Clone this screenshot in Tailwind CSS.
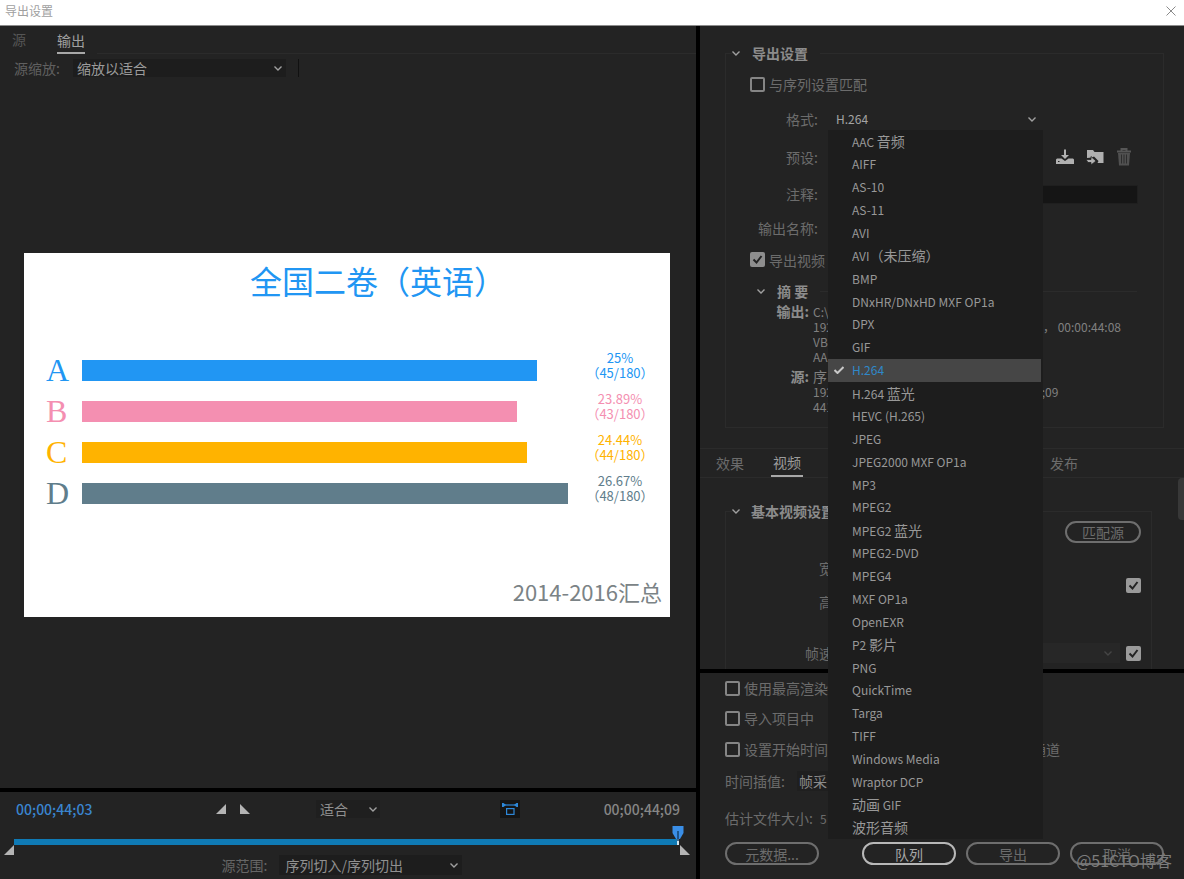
<!DOCTYPE html>
<html lang="zh-CN">
<head>
  <meta charset="UTF-8" />
  <meta name="viewport" content="width=device-width, initial-scale=1" />
  <title>导出设置</title>

  <!-- Tailwind CSS via CDN -->
  <script src="https://cdn.jsdelivr.net/npm/@tailwindcss/browser@4"></script>
</head>
<body class="flex min-h-screen flex-col bg-[#232323] font-['Noto_Sans_CJK_SC','Noto_Sans',sans-serif] text-sm/5 text-[#6c6c6c]">
  <!-- Title bar -->
  <header class="flex h-[26px] items-center justify-between border-b border-[#8c8c8c] bg-white pr-2 pb-1 pl-[5px]">
    <h1 class="text-xs text-[#a0a0a0]">导出设置</h1>
    <button aria-label="关闭">
      <svg class="size-[10px]" viewBox="0 0 10 10" fill="none" stroke="#8a8a8a"><path d="M0.5 0.5 9.5 9.5M9.5 0.5 0.5 9.5" /></svg>
    </button>
  </header>

  <main class="grid flex-1 grid-cols-[700fr_484fr]">
    <!-- Left: preview -->
    <section class="flex flex-col border-r-4 border-black">
      <nav class="flex h-7 items-end pl-3">
        <button class="mr-[31px] h-7 pt-0.5 pb-1 text-[#555]">源</button>
        <button class="h-7 border-b-2 border-[#a8a8a8] pt-0.5 text-[#a0a0a0]">输出</button>
        <span class="ml-3 flex-1 border-b border-[#2b2b2b]"></span>
      </nav>
      <div class="flex h-7 items-center pl-[14px]">
        <label for="scale" class="w-[59px] text-[#606060]">源缩放:</label>
        <div class="grid w-[213px] items-center bg-[#1d1d1d]">
          <select id="scale" class="col-start-1 row-start-1 h-[18px] appearance-none pl-1 text-sm/[18px] text-[#9c9c9c]"><option>缩放以适合</option></select>
          <svg class="pointer-events-none col-start-1 row-start-1 mr-1 h-[5px] w-2 justify-self-end" viewBox="0 0 8 5" fill="none" stroke="#a0a0a0" stroke-width="1.4"><path d="M0.5 0.5 4 4 7.5 0.5" /></svg>
        </div>
        <span class="ml-3 h-[18px] w-px bg-[#111]"></span>
      </div>

      <div class="flex flex-1 items-center pr-[26px] pl-6">
        <figure class="flex aspect-video w-full flex-col bg-white">
          <h2 class="h-[97px] pt-[5px] pl-[35%] text-[32px]/[44px] text-[#2196f3]">全国二卷（英语）</h2>
          <div id="chart"></div>
          <figcaption class="mt-auto pr-2 pb-2.5 text-right text-[22px]/[32px] text-[#7b8386]">2014-2016汇总</figcaption>
        </figure>
      </div>

      <!-- Transport -->
      <div class="border-t-4 border-black">
        <div class="grid h-[34px] grid-cols-[200px_100px_184px_1fr] items-center pr-4 pl-4">
          <span class="font-medium text-[#3a85cf]">00;00;44;03</span>
          <div class="flex gap-[14px]">
            <button aria-label="设置入点"><svg class="size-[10px]" viewBox="0 0 10 10" fill="#b4b4b4"><path d="M10 0V10H0Z" /></svg></button>
            <button aria-label="设置出点"><svg class="size-[10px]" viewBox="0 0 10 10" fill="#b4b4b4"><path d="M0 0V10H10Z" /></svg></button>
          </div>
          <div class="grid w-16 items-center bg-[#1f1f1f]">
            <select aria-label="缩放级别" class="col-start-1 row-start-1 h-[18px] appearance-none pl-1 text-sm/[18px] text-[#909090]"><option>适合</option></select>
            <svg class="pointer-events-none col-start-1 row-start-1 mr-[3px] h-[5px] w-2 justify-self-end" viewBox="0 0 8 5" fill="none" stroke="#a0a0a0" stroke-width="1.4"><path d="M0.5 0.5 4 4 7.5 0.5" /></svg>
          </div>
          <div class="flex items-center justify-between">
            <button aria-label="长宽比校正" class="bg-[#151515] p-px">
              <svg class="h-[16px] w-[18px]" viewBox="0 0 18 16" fill="none" stroke="#2d87d8" stroke-width="1.2">
                <path d="M2 4H16" />
                <path d="M1 2H2.500L5 4 2.500 6H1ZM17 2H15.500L13 4 15.500 6H17Z" fill="#2d87d8" stroke="none" />
                <rect x="5.600" y="7.600" width="7.400" height="5.800" />
              </svg>
            </button>
            <span class="font-medium text-[#868686]">00;00;44;09</span>
          </div>
        </div>
        <div class="flex h-[13px] justify-end pr-3">
          <svg class="h-[15px] w-3" viewBox="0 0 12 15"><path d="M0.500 0H11.500V7L8 13H4L0.500 7Z" fill="#3a8ee6" /><path d="M6 5V15" stroke="#14406b" stroke-width="1.500" /></svg>
        </div>
        <div class="mr-[17px] ml-[14px] h-1.5 border-r-2 border-[#cfe3ee] bg-[#0f7ab5]"></div>
        <div class="flex justify-between pr-1.5 pl-1">
          <svg class="size-[10px]" viewBox="0 0 10 10" fill="#b4b4b4"><path d="M10 0V10H0Z" /></svg>
          <svg class="size-[10px]" viewBox="0 0 10 10" fill="#b4b4b4"><path d="M0 0V10H10Z" /></svg>
        </div>
        <div class="flex items-center justify-center pr-3 pb-1">
          <label for="range" class="mr-3 text-[#666]">源范围:</label>
          <div class="grid w-[183px] items-center bg-[#1d1d1d]">
            <select id="range" class="col-start-1 row-start-1 h-5 appearance-none pl-1.5 text-[#909090]"><option>序列切入/序列切出</option></select>
            <svg class="pointer-events-none col-start-1 row-start-1 mr-1 h-[5px] w-2 justify-self-end" viewBox="0 0 8 5" fill="none" stroke="#a0a0a0" stroke-width="1.4"><path d="M0.5 0.5 4 4 7.5 0.5" /></svg>
          </div>
        </div>
      </div>
    </section>

    <!-- Right: settings -->
    <section class="flex flex-col">
      <fieldset class="mt-[17px] mr-5 mb-5 ml-[25px] border border-[#2b2b2b] pb-[13px]">
        <legend class="ml-1.5 flex h-5 items-center gap-3 pr-3 font-bold text-[#8c8c8c]">
          <svg class="h-[5px] w-2" viewBox="0 0 8 5" fill="none" stroke="#a0a0a0" stroke-width="1.4"><path d="M0.5 0.5 4 4 7.5 0.5" /></svg>
          导出设置
        </legend>
        <label class="flex h-[42px] items-center gap-1 pl-6">
          <input type="checkbox" class="size-[15px] appearance-none rounded-xs border-2 border-[#858585]" />与序列设置匹配
        </label>
        <div class="relative grid h-7 grid-cols-[92px_210px] items-center gap-3">
          <label for="format" class="text-right">格式:</label>
          <div class="grid items-center">
            <select id="format" class="col-start-1 row-start-1 h-5 appearance-none pl-1.5 text-xs text-[#a4a4a4]"><option>H.264</option></select>
            <svg class="pointer-events-none col-start-1 row-start-1 mr-1 h-[5px] w-2 justify-self-end" viewBox="0 0 8 5" fill="none" stroke="#a0a0a0" stroke-width="1.4"><path d="M0.5 0.5 4 4 7.5 0.5" /></svg>
          </div>
          <ul id="formats" class="absolute top-[25px] left-[102px] z-10 flex h-[709px] w-[215px] flex-col bg-[#1d1d1d]"></ul>
        </div>
        <div class="grid h-12 grid-cols-[92px_1fr] items-center gap-3">
          <span class="text-right">预设:</span>
          <div class="flex items-center justify-end gap-3 pr-[31px]">
            <button aria-label="保存预设">
              <svg class="h-4 w-[18px]" viewBox="0 0 18 16" fill="#b0b0b0">
                <path d="M8 0.500H10V6H13L9 10 5 6H8Z" />
                <path fill-rule="evenodd" d="M1 9.500H5.500L9 12 12.500 9.500H17L18 10.500V15H0V10.500ZM2 12V13H3.500V12Z" />
              </svg>
            </button>
            <button aria-label="导入预设">
              <svg class="h-4 w-[18px]" viewBox="0 0 18 16" fill="#b0b0b0">
                <path d="M1 1H7L8.500 3H17.500V14H11.500L12.500 12 8 7.500 6 8.500 1 9Z" />
                <path d="M0 10.500H5V7.500L10 12 5 16V13.500H2Z" stroke="#232323" stroke-width="0.800" />
              </svg>
            </button>
            <button aria-label="删除预设">
              <svg class="h-[18px] w-4" viewBox="0 0 16 18">
                <path d="M5.500 2.500V1H10.500V2.500M1 3.500H15" stroke="#565656" stroke-width="2" fill="none" />
                <path d="M2 5H14L13 17.500H3Z" fill="#505050" />
                <path d="M5.500 6.500V15.500M8 6.500V15.500M10.500 6.500V15.500" stroke="#2d2d2d" />
              </svg>
            </button>
          </div>
        </div>
        <div class="grid h-[26px] grid-cols-[92px_1fr] items-center gap-3 pr-[25px]">
          <label for="comment" class="text-right">注释:</label>
          <input id="comment" class="h-[19px] w-full border border-[#1f1f1f] bg-[#151515] px-1 text-xs" />
        </div>
        <div class="grid h-[42px] grid-cols-[92px_1fr] items-center gap-3">
          <span class="text-right">输出名称:</span>
        </div>
        <label class="flex h-[21px] items-center gap-1 pl-6">
          <span class="grid">
            <input type="checkbox" checked class="col-start-1 row-start-1 size-[15px] appearance-none rounded-xs bg-[#8e8e8e]" />
            <svg class="pointer-events-none col-start-1 row-start-1 size-[15px]" viewBox="0 0 15 15" fill="none" stroke="#232323" stroke-width="2"><path d="M3.500 7.500 6.500 10.500 11.500 4" /></svg>
          </span>
          导出视频
        </label>
        <div class="mt-3 mb-1 flex h-[18px] items-center pr-[26px] pl-[31px] font-bold text-[#8c8c8c]">
          <svg class="mr-3 h-[5px] w-2" viewBox="0 0 8 5" fill="none" stroke="#a0a0a0" stroke-width="1.4"><path d="M0.5 0.5 4 4 7.5 0.5" /></svg>
          摘 要
          <span class="ml-3 flex-1 border-t border-[#2b2b2b]"></span>
        </div>
        <dl class="grid grid-cols-[83px_1fr] gap-x-1 gap-y-[5px] text-xs/[15px] text-[#808080]">
          <dt class="text-right text-sm/[15px] font-bold text-[#8c8c8c]">输出:</dt>
          <dd class="grid grid-cols-[218px_1fr] whitespace-nowrap">
            <span class="col-span-2">C:\</span>
            <span>192</span><span>码， 00:00:44:08</span>
            <span class="col-span-2">VB</span>
            <span class="col-span-2">AA</span>
          </dd>
          <dt class="text-right text-sm/[15px] font-bold text-[#8c8c8c]">源:</dt>
          <dd class="grid grid-cols-[222px_1fr] whitespace-nowrap">
            <span class="col-span-2 text-sm/[15px]">序</span>
            <span>192</span><span>4;09</span>
            <span class="col-span-2">441</span>
          </dd>
        </dl>
      </fieldset>

      <nav class="flex h-[30px] items-center border-y border-[#2b2b2b] pr-[106px] pl-4">
        <button>效果</button>
        <button class="ml-[27px] h-[27px] border-b-2 border-[#a8a8a8] px-0.5 text-[#9c9c9c]">视频</button>
        <button class="ml-auto">发布</button>
      </nav>

      <div class="relative flex-1 pt-[23px] pr-[32px] pl-[25px]">
        <span class="absolute top-0 right-0 h-[42px] w-1.5 rounded-l-sm bg-[#383838]"></span>
        <fieldset class="h-full border border-b-0 border-[#2b2b2b]">
          <legend class="ml-1.5 flex h-5 items-center gap-[11px] pr-3 font-bold text-[#8c8c8c]">
            <svg class="h-[5px] w-2" viewBox="0 0 8 5" fill="none" stroke="#a0a0a0" stroke-width="1.4"><path d="M0.5 0.5 4 4 7.5 0.5" /></svg>
            基本视频设置
          </legend>
          <div class="flex justify-end pr-2.5">
            <button class="h-[22px] w-[76px] rounded-full border-2 border-[#6e6e6e] text-sm/[16px]">匹配源</button>
          </div>
          <div class="mt-2 flex items-center justify-between pr-2.5">
            <div class="w-[125px] text-right leading-[34px]">
              <p>宽度:</p>
              <p>高度:</p>
            </div>
            <span class="grid">
              <input type="checkbox" checked aria-label="匹配宽度和高度" class="col-start-1 row-start-1 size-[15px] appearance-none rounded-xs bg-[#9a9a9a]" />
              <svg class="pointer-events-none col-start-1 row-start-1 size-[15px]" viewBox="0 0 15 15" fill="none" stroke="#232323" stroke-width="2"><path d="M3.500 7.500 6.500 10.500 11.500 4" /></svg>
            </span>
          </div>
          <div class="mt-[18px] flex h-8 items-center pr-2.5">
            <label for="fps" class="mr-3 w-[125px] text-right">帧速率:</label>
            <div class="mr-1.5 grid flex-1 items-center bg-[#272727]">
              <select id="fps" class="col-start-1 row-start-1 h-5 appearance-none"></select>
              <svg class="pointer-events-none col-start-1 row-start-1 mr-2 h-[5px] w-2 justify-self-end" viewBox="0 0 8 5" fill="none" stroke="#454545" stroke-width="1.4"><path d="M0.5 0.5 4 4 7.5 0.5" /></svg>
            </div>
            <span class="grid">
              <input type="checkbox" checked aria-label="匹配帧速率" class="col-start-1 row-start-1 size-[15px] appearance-none rounded-xs bg-[#9a9a9a]" />
              <svg class="pointer-events-none col-start-1 row-start-1 size-[15px]" viewBox="0 0 15 15" fill="none" stroke="#232323" stroke-width="2"><path d="M3.500 7.500 6.500 10.500 11.500 4" /></svg>
            </span>
          </div>
        </fieldset>
      </div>

      <!-- Export options and actions -->
      <div class="relative border-t-4 border-black pr-5 pb-[14px] pl-[25px]">
        <label class="flex h-[30px] items-center gap-1"><input type="checkbox" class="size-[15px] appearance-none rounded-xs border-2 border-[#858585]" />使用最高渲染</label>
        <label class="flex h-[30px] items-center gap-1"><input type="checkbox" class="size-[15px] appearance-none rounded-xs border-2 border-[#858585]" />导入项目中</label>
        <div class="flex h-8 items-center justify-between pr-[104px]">
          <label class="flex items-center gap-1"><input type="checkbox" class="size-[15px] appearance-none rounded-xs border-2 border-[#858585]" />设置开始时间</label>
          <label class="flex items-center gap-1"><input type="checkbox" class="size-[15px] appearance-none rounded-xs border-2 border-[#858585]" />通道</label>
        </div>
        <div class="flex h-8 items-center gap-3">
          <label for="interp">时间插值:</label>
          <select id="interp" class="h-5 w-40 appearance-none bg-[#1f1f1f] px-0.5 text-[#8c8c8c]"><option>帧采</option></select>
        </div>
        <p class="h-[42px] leading-[42px]">估计文件大小: <span class="ml-1 text-xs">5</span></p>
        <div class="mt-[3px] flex gap-2.5">
          <button class="mr-auto h-[23px] w-[94px] rounded-full border-2 border-[#6e6e6e] text-sm/[16px]">元数据...</button>
          <button class="h-[23px] w-[94px] rounded-full border-2 border-[#b8b8b8] text-sm/[16px] text-[#a8a8a8]">队列</button>
          <button class="h-[23px] w-[94px] rounded-full border-2 border-[#6e6e6e] text-sm/[16px]">导出</button>
          <button class="h-[23px] w-[94px] rounded-full border-2 border-[#6e6e6e] text-sm/[16px]">取消</button>
        </div>
        <span class="pointer-events-none absolute right-3 bottom-[9px] text-base/5 text-[#7c7c7c]">@51CTO博客</span>
      </div>
    </section>
  </main>

  <script>
    const chart = [
      { name: 'A', share: 25, count: 45, text: 'text-[#2196f3]', bar: 'bg-[#2196f3]' },
      { name: 'B', share: 23.89, count: 43, text: 'text-[#f48fb1]', bar: 'bg-[#f48fb1]' },
      { name: 'C', share: 24.44, count: 44, text: 'text-[#ffb300]', bar: 'bg-[#ffb300]' },
      { name: 'D', share: 26.67, count: 48, text: 'text-[#607d8b]', bar: 'bg-[#607d8b]' },
    ];
    // Bars are drawn against a scale that ends a little above the largest share.
    const scaleMax = 26.8;

    document.getElementById('chart').innerHTML = chart.map((c) => `
      <div class="grid h-[41px] grid-cols-[36px_1fr_100px] items-center pl-[22px] ${c.text}">
        <span class="font-['Liberation_Serif',serif] text-[32px]/[41px]">${c.name}</span>
        <span class="h-[21px] ${c.bar}" style="width: ${c.share / scaleMax * 100}%"></span>
        <span class="self-start text-center text-[13px]/[15px] whitespace-nowrap">${c.share}%<br />（${c.count}/180）</span>
      </div>
    `).join('');

    const formats = [
      'AAC 音频', 'AIFF', 'AS-10', 'AS-11', 'AVI', 'AVI（未压缩）', 'BMP', 'DNxHR/DNxHD MXF OP1a',
      'DPX', 'GIF', 'H.264', 'H.264 蓝光', 'HEVC (H.265)', 'JPEG', 'JPEG2000 MXF OP1a', 'MP3',
      'MPEG2', 'MPEG2 蓝光', 'MPEG2-DVD', 'MPEG4', 'MXF OP1a', 'OpenEXR', 'P2 影片', 'PNG',
      'QuickTime', 'Targa', 'TIFF', 'Windows Media', 'Wraptor DCP', '动画 GIF', '波形音频',
    ];
    const tick = '<svg class="mr-2 ml-1.5 h-2 w-[10px]" viewBox="0 0 10 8" fill="none" stroke="#c8c8c8" stroke-width="2"><path d="M0.500 4 3.500 7 9.500 1" /></svg>';

    // Chinese words in the list are set one size up from the Latin ones.
    const label = (name) => name.replace(/[（\u4e00-\u9fff）]+/g, '<span class="text-sm/5">$&</span>');

    document.getElementById('formats').innerHTML = formats.map((name) => name === 'H.264'
      ? `<li class="mr-0.5 flex-1 bg-[#464646]"><button class="flex size-full items-center text-xs text-[#2f88c9]">${tick}${name}</button></li>`
      : `<li class="min-h-0 flex-1"><button class="block size-full pl-6 text-left text-xs/5 whitespace-pre text-[#989898]">${label(name)}</button></li>`
    ).join('');
  </script>
</body>
</html>
